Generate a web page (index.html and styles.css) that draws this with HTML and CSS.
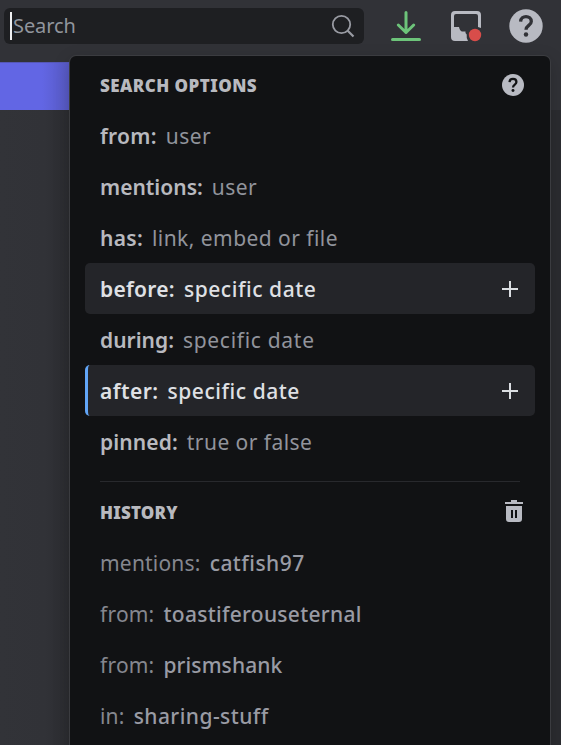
FILE: index.html
```html
<!DOCTYPE html>
<html lang="en">
<head>
<meta charset="utf-8">
<title>Search</title>
<link rel="stylesheet" href="styles.css">
</head>
<body>
<header class="toolbar">
  <div class="search"><span class="caret"></span><span class="placeholder">Search</span>
    <svg class="glass" width="24" height="24" viewBox="0 0 24 24" fill="none" stroke="#999ba3" stroke-width="1.8"><circle cx="10.500" cy="10.500" r="8.700"/><path d="M16.700 16.700L22.500 22.500" stroke-width="2.200"/></svg>
  </div>
  <svg class="download" width="30" height="32" viewBox="0 0 30 32" fill="none" stroke="#6dc47a" stroke-width="3" stroke-linecap="round" stroke-linejoin="round"><path d="M15 2.500V22.500M7.300 15L15 22.500L22.700 15"/><path d="M1.500 29.500H28.500"/></svg>
  <svg class="inbox" width="32" height="32" viewBox="0 0 32 32"><path fill="#b8bac2" d="M4 0H26Q30 0 30 4V17L27 16V5Q27 3 25 3H5Q3 3 3 5V16H8Q8.800 19.800 11 20.500H14.500V22L15.700 23.500Q15.200 27 17 30H4Q0 30 0 26V4Q0 0 4 0Z"/><circle cx="24" cy="24" r="6.200" fill="#d84d4a"/></svg>
  <svg class="help" width="34" height="34" viewBox="0 0 34 34"><circle cx="17" cy="17" r="16.700" fill="#b8bac2"/><path d="M11.600 12.600C11.800 5.800 22.300 6 22.300 12.500C22.300 16.500 17 16.300 17 20.800" fill="none" stroke="#313237" stroke-width="3.300"/><circle cx="17" cy="25.500" r="2.200" fill="#313237"/></svg>
</header>
<div class="banner"></div>
<div class="side"></div>
<section class="panel">
  <div class="heading"><h2>SEARCH OPTIONS</h2>
    <svg class="small-help" width="22" height="22" viewBox="0 0 34 34"><circle cx="17" cy="17" r="17" fill="#b8bac2"/><path d="M11.600 12.600C11.800 5.800 22.300 6 22.300 12.500C22.300 16.500 17 16.300 17 20.800" fill="none" stroke="#111214" stroke-width="3.500"/><circle cx="17" cy="25.500" r="2.300" fill="#111214"/></svg>
  </div>
  <ul class="options">
    <li><b class="loose">from:</b><span>user</span></li>
    <li><b>mentions:</b><span>user</span></li>
    <li><b class="loose">has:</b><span>link, embed or file</span></li>
    <li class="active"><b class="loose">before:</b><span>specific date</span><svg width="16" height="16" viewBox="0 0 16 16"><path d="M8 0V16M0 8H16" stroke="#dbdee1" stroke-width="2"/></svg></li>
    <li><b>during:</b><span class="airy">specific date</span></li>
    <li class="active focused"><b class="wide">after:</b><span>specific date</span><svg width="16" height="16" viewBox="0 0 16 16"><path d="M8 0V16M0 8H16" stroke="#dbdee1" stroke-width="2"/></svg></li>
    <li><b class="nudge">pinned:</b><span>true or false</span></li>
  </ul>
  <div class="divider"></div>
  <div class="heading history-heading"><h2>HISTORY</h2>
    <svg class="trash" width="18" height="22" viewBox="0 0 18 22"><path fill="#b8bac2" fill-rule="evenodd" d="M6 0H12V2H18V4H0V2H6ZM1 6H17V19Q17 22 14 22H4Q1 22 1 19ZM6 10V18H8V10ZM10 10V18H12V10Z"/></svg>
  </div>
  <ul class="history">
    <li><span>mentions:</span><b class="wide">catfish97</b></li>
    <li><span>from:</span><b class="loose">toastiferouseternal</b></li>
    <li><span>from:</span><b class="nudge">prismshank</b></li>
    <li><span>in:</span><b class="wide">sharing-stuff</b></li>
  </ul>
</section>
</body>
</html>
```
FILE: styles.css
```css
* { box-sizing: border-box; }
body {
  margin: 0;
  width: 561px;
  height: 745px;
  overflow: hidden;
  position: relative;
  background: #313237;
  font-family: "Noto Sans", sans-serif;
  font-size: 21px;
}
.toolbar { height: 62px; display: flex; align-items: flex-start; padding: 8px 0 0 4px; }
.search { width: 360px; height: 36px; border-radius: 6px; background: #1e1f22; display: flex; align-items: center; padding: 0 9px 0 6px; }
.caret { width: 2px; height: 28px; background: #eeeff1; }
.placeholder { color: #91959d; font-size: 20px; letter-spacing: -.1px; margin-left: 1px; line-height: 36px; }
.glass { margin-left: auto; }
.download { margin: 2px 0 0 27px; }
.inbox { margin: 3px 0 0 30px; }
.help { margin: 1px 0 0 26px; }
.banner { width: 70px; height: 48px; background: linear-gradient(90deg, #6266e4 0, #6266e4 42px, #5759c2 70px); border-top: 1px solid #5557b6; }
.side { height: 635px; background: linear-gradient(90deg, #323338 0, #313237 45px, #2b2c30 70px, #2b2c30 100%); }
.panel {
  position: absolute;
  top: 56px;
  left: 70px;
  width: 480px;
  height: 700px;
  padding: 0 15px;
  background: #111214;
  border-radius: 6px;
  box-shadow: 0 0 0 1px #3b3c40, 0 5px 18px #0003;
}
.heading { height: 55px; padding: 0 11px 0 15px; display: flex; align-items: center; justify-content: space-between; }
h2 { margin: 5px 0 0; font-size: 17px; line-height: 24px; font-weight: 900; letter-spacing: .45px; color: #b8b9bf; }
.small-help { margin-top: 3px; }
ul { list-style: none; margin: 0; padding: 0; }
.options { position: relative; margin-top: -1px; }
li { height: 51px; padding: 0 17.5px 0 15px; display: flex; align-items: center; white-space: nowrap; color: #949ba4; }
li svg { margin-left: auto; }
li > :first-child { margin-right: 9px; }
b { font-weight: 600; }
.options b { color: #b8b9bf; }
.options span { color: #91949c; letter-spacing: .45px; }
.loose, .options .loose { letter-spacing: .28px; }
.wide { letter-spacing: .45px; }
.nudge { letter-spacing: .1px; }
.options .airy { letter-spacing: .7px; }
.options .active { background: #242529; border-radius: 5px; }
.options .active b, .options .active span { color: #dfe0e4; }
.options .active span { font-weight: 500; letter-spacing: .55px; }
.options .focused { border-left: 3px solid #61a5f7; padding-left: 12px; }
.divider { height: 1px; margin: 14px 15px 0; background: #28292d; }
.history-heading { height: 55px; padding-right: 12px; }
.history-heading h2 { margin-top: 7px; letter-spacing: .2px; }
.trash { margin: 3px 0 0; }
.history b { font-weight: 500; color: #999ba4; }
.history span { color: #85878f; letter-spacing: .2px; }
```
